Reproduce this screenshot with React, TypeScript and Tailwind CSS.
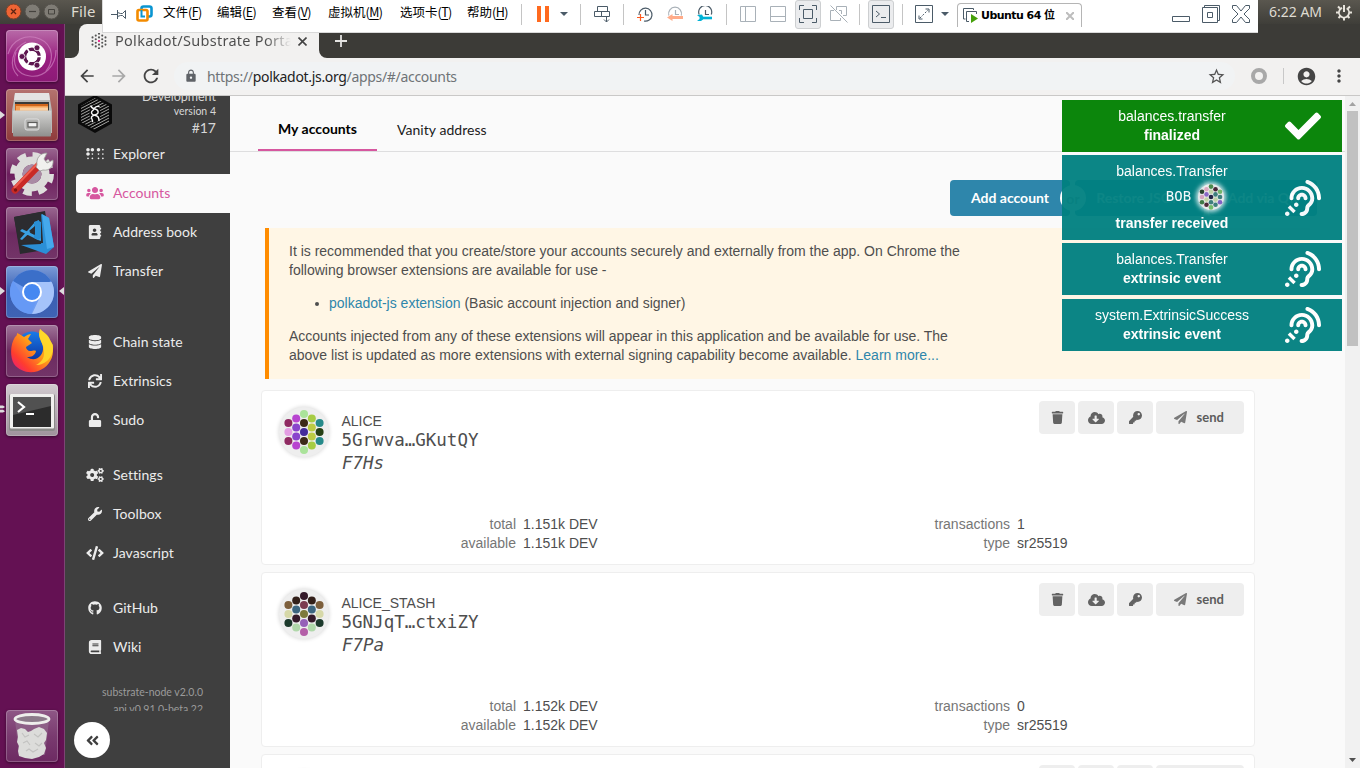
import type { ReactNode } from 'react';
import {
  FaAddressBook,
  FaAngleDoubleLeft,
  FaAssistiveListeningSystems,
  FaBook,
  FaBraille,
  FaCheck,
  FaCloudDownloadAlt,
  FaCode,
  FaCogs,
  FaDatabase,
  FaGithub,
  FaKey,
  FaPaperPlane,
  FaSync,
  FaTrash,
  FaUnlock,
  FaUsers,
  FaWrench,
} from 'react-icons/fa';
import { MdAccountCircle, MdArrowBack, MdArrowForward, MdLock, MdMoreVert, MdRefresh, MdStarBorder } from 'react-icons/md';

/* ---------- identicons ---------- */

const COLUMNS = [
  { x: -15.6, ys: [-9, 0, 9] },
  { x: -7.8, ys: [-13.5, -4.5, 4.5, 13.5] },
  { x: 0, ys: [-18, -9, 0, 9, 18] },
  { x: 7.8, ys: [-13.5, -4.5, 4.5, 13.5] },
  { x: 15.6, ys: [-9, 0, 9] },
];

const ALICE = [
  ['#8f2a62', '#e39ee3', '#8f2a62'],
  ['#b844d0', '#8a44cc', '#8a44cc', '#b844d0'],
  ['#aae39a', '#3c2a18', '#432c9b', '#3c2a18', '#aae39a'],
  ['#a6cc44', '#bccb44', '#bccb44', '#a6cc44'],
  ['#268a8a', '#263f14', '#268a8a'],
];

const ALICE_STASH = [
  ['#7d5f3c', '#d6d8a8', '#1c3a2c'],
  ['#33201a', '#3d6680', '#351a2a', '#b0d8aa'],
  ['#351a2a', '#7c3c50', '#7d7a3c', '#9560b8', '#b45fa8'],
  ['#33201a', '#3d6680', '#351a2a', '#b0d8aa'],
  ['#7d5f3c', '#d6d8a8', '#1c3a2c'],
];

const BOB = [
  ['#2c3f28', '#dda5be', '#427a42'],
  ['#dda5be', '#8560c4', '#c3d3a2', '#4a2030'],
  ['#4c8a48', '#c8d8a8', '#23203f', '#3e7f7a', '#78c068'],
  ['#4a2030', '#3e7f7a', '#c8d8a8', '#3e7f7a'],
  ['#78b868', '#3e7f7a', '#8560c4'],
];

function Dots({ colors, size }: { colors: string[][]; size: number }) {
  return (
    <svg width={size} height={size} viewBox={size === 50 ? '-25 -25 50 50' : '-22.5 -22.5 45 45'}>
      {COLUMNS.map((c, i) => c.ys.map((y, j) => <circle key={`${i}-${j}`} cx={c.x} cy={y} r={4} fill={colors[i][j]} />))}
    </svg>
  );
}

/* ---------- launcher ---------- */

function Tile({ className, children }: { className: string; children?: ReactNode }) {
  return (
    <div className={`h-[52px] w-[52px] shrink-0 overflow-hidden rounded-[4px] shadow-[0_1px_3px_rgba(0,0,0,.45),inset_0_0_0_1px_rgba(255,255,255,.22)] ${className}`}>
      <svg width="52" height="52" viewBox="0 0 52 52">
        {children}
      </svg>
    </div>
  );
}

function Launcher() {
  return (
    <div className="relative flex w-[65px] shrink-0 flex-col items-center gap-[7px] border-r border-[#7d4474] bg-[#641153] pt-[6px] pb-[6px]">
      <Tile className="bg-linear-to-b from-[#b86aa8] via-[#9a1f82] to-[#8c1a76]">
        <g fill="none" stroke="#d78fc9" strokeWidth="1.2" opacity=".6">
          <path d="M2 24C6 10 20 3 34 9s14 22 6 32" />
          <path d="M50 20c0 16-12 28-26 26S6 34 10 22" />
          <path d="M12 46C2 36 6 18 20 12" />
        </g>
        <circle cx="26" cy="26.5" r="14" fill="#fff" />
        <circle cx="26" cy="26.5" r="7.2" fill="none" stroke="#5e1750" strokeWidth="3.4" />
        <g stroke="#fff" strokeWidth="1.6">
          <path d="M26 26.500H38M26 26.500l-6-10.400M26 26.500l-6 10.400" />
        </g>
        <circle cx="26" cy="26.5" r="5.5" fill="#fff" />
        <circle cx="16" cy="26.5" r="3" fill="#5e1750" stroke="#fff" strokeWidth=".8" />
        <circle cx="31" cy="17.8" r="3" fill="#5e1750" stroke="#fff" strokeWidth=".8" />
        <circle cx="31" cy="35.2" r="3" fill="#5e1750" stroke="#fff" strokeWidth=".8" />
      </Tile>
      <Tile className="bg-linear-to-b from-[#b5736f] to-[#8e3a3b]">
        <defs>
          <linearGradient id="cab" x2="0" y2="1">
            <stop stopColor="#d6d6d4" />
            <stop offset="1" stopColor="#8f8f8d" />
          </linearGradient>
        </defs>
        <path d="M9 4h34l3 18v22H6V22z" fill="#b9b9b7" />
        <path d="M9 4h34l1 7H8z" fill="#e4e4e2" />
        <path d="M9 13h34v9H9z" fill="#3a3a38" />
        <path d="M9 15h33v7H9z" fill="#d0661c" />
        <path d="M10 17h32v5H10z" fill="#f3a055" />
        <path d="M14 18.500h28v3H14z" fill="#fbd0a0" />
        <rect x="7" y="21.5" width="38" height="26" rx="1" fill="url(#cab)" />
        <rect x="19" y="30" width="14" height="11" rx="2" fill="#b1b1af" stroke="#dedede" strokeWidth="1" />
        <rect x="22" y="33.5" width="9" height="4.5" fill="#f4f4f4" stroke="#5d5d5b" strokeWidth="1.2" />
      </Tile>
      <Tile className="bg-linear-to-b from-[#9a6791] via-[#6c1d5d] to-[#7c3b70]">
        <circle cx="26" cy="26" r="19" fill="none" stroke="#dededc" strokeWidth="6" strokeDasharray="8.4 6.52" />
        <circle cx="26" cy="26" r="13.5" fill="none" stroke="#dcdcda" strokeWidth="8" />
        <circle cx="26" cy="26" r="9.5" fill="#a98ba4" />
        <path d="M9 42L34 16" stroke="#c92a26" strokeWidth="7" strokeLinecap="round" />
        <path d="M8 40L32 15" stroke="#ee5e50" strokeWidth="2" />
        <circle cx="9.5" cy="42" r="1.7" fill="#7d1412" />
        <path d="M31 17c-1-7 3-12 10-12l-3 6 3 4 6-3c1 7-4 11-10 10l-3 1-4-4z" fill="#f0f0ee" stroke="#9a9a98" strokeWidth=".8" />
      </Tile>
      <Tile className="bg-linear-to-b from-[#9a6791] via-[#6c2a60] to-[#733468]">
        <path d="M8 10l31-6 6 38-31 5z" fill="#2a2a2e" />
        <path d="M35 7l8 4 5 29-8 7-25-9 20-1z" fill="#2b8fd6" />
        <path d="M36 7l7 4 5 29-7 2z" fill="#45a9ec" />
        <path d="M8 10l27-5 2 31-24 1z" fill="#2c2c30" />
        <path d="M14 24l2-2 19 9v3l-3-1zM14 32l15-17 4-2v4L16 33z" fill="#3aa0e2" />
        <path d="M28 15l4-1.500 3 1.500v16l-3 2-4-2z" fill="#2a8fd4" />
        <path d="M29 19v9l-6-4z" fill="#2c2c30" />
      </Tile>
      <Tile className="bg-linear-to-b from-[#7c9cd8] via-[#3a5fb2] to-[#3f63b4]">
        <circle cx="26" cy="26" r="22" fill="#6f9df2" />
        <path d="M26 26L7 15A22 22 0 0 1 45 15z" fill="#3b6fc9" />
        <path d="M26 16h19.600A22 22 0 0 1 26 48l8-17z" fill="#a5c3fa" />
        <path d="M7 15l10 16 9 4 4 0-5 13A22 22 0 0 1 7 15z" fill="#6699f5" />
        <circle cx="26" cy="26" r="10" fill="#fff" />
        <circle cx="26" cy="26" r="8" fill="#4688f1" />
      </Tile>
      <Tile className="bg-linear-to-b from-[#a0759a] via-[#6c2a60] to-[#733468]">
        <defs>
          <linearGradient id="fox" x1="1" y1="0" x2="0" y2="1">
            <stop stopColor="#ffe226" />
            <stop offset=".45" stopColor="#ff9a1a" />
            <stop offset=".75" stopColor="#ff3d2e" />
            <stop offset="1" stopColor="#e5128c" />
          </linearGradient>
          <linearGradient id="globe" x2="0" y2="1">
            <stop stopColor="#1a7be8" />
            <stop offset="1" stopColor="#0b2f9c" />
          </linearGradient>
        </defs>
        <circle cx="26" cy="22" r="15.5" fill="url(#globe)" />
        <path d="M9 12c2-1 2-3 2-4 3 1 5 3 7 4 3-2 5-3 7-3l-3 5 4 4-6 4c0 2 2 4 4 4 3 0 4-1 6 0-1 5-5 6-9 6 8 6 17-1 16-10-1-7-6-9-3-18 3 3 8 5 10 11l2 4c3 10-1 19-8 24-10 7-23 5-30-4C4 32 4 20 9 12z" fill="url(#fox)" />
        <path d="M34 4c-3 10 4 14 4 22 1 8-4 12-8 14 10 0 18-8 17-20l-3-5c-2-6-7-7-10-11z" fill="#ffdc2b" opacity=".85" />
      </Tile>
      <Tile className="bg-linear-to-b from-[#d2cbd0] to-[#9f939c]">
        <rect x="3" y="10" width="46" height="37" rx="2" fill="#8a8a88" />
        <rect x="4" y="10" width="44" height="34.5" rx="1" fill="#f0f0ee" />
        <rect x="7" y="13" width="38" height="30" fill="#2c2c2c" />
        <path d="M7 13h38v9L7 31z" fill="#515151" />
        <path d="M12 18l6 5-6 5" fill="none" stroke="#fff" strokeWidth="2.2" />
        <path d="M20 30h8" stroke="#fff" strokeWidth="2" />
      </Tile>
      <div className="flex-1" />
      <Tile className="bg-linear-to-b from-[#8e5786] via-[#7a3b70] to-[#6d2a62]">
        <path d="M9 10h34l-4 35H13z" fill="#9c7f9a" opacity=".45" />
        <path d="M11 20l4-2 4 1 3 3 3-1 3-2 5-2 5 2 3 4-1 7-2 3 2 5-2 6-5 3-7 2-7-1-6-2-1-5 1-5-2-4 1-5z" fill="#dcdcda" />
        <path d="M16 23l3 4 4-2M28 24l4 3 4-4M17 33l4-2 3 4M29 33l4 3 3-3M20 41l3-2 4 3 5-3" fill="none" stroke="#c2c2c0" strokeWidth="1.1" />
        <ellipse cx="26" cy="9" rx="17" ry="4.5" fill="#8c7a8a" stroke="#eeeeec" strokeWidth="2.8" />
      </Tile>
      <svg className="absolute left-0 top-[87px]" width="5" height="8"><path d="M0 0l5 4-5 4z" fill="#ddd" /></svg>
      <svg className="absolute left-0 top-[263px]" width="5" height="8"><path d="M0 0l5 4-5 4z" fill="#ddd" /></svg>
      <svg className="absolute right-0 top-[263px]" width="5" height="8"><path d="M5 0L0 4l5 4z" fill="#ddd" /></svg>
      <svg className="absolute left-0 top-[381px]" width="5" height="8"><path d="M0 .5h3l2 1.500-2 1.200H0zM0 4.800h3l2 1.500-2 1.200H0z" fill="#ddd" /></svg>
    </div>
  );
}

/* ---------- virtual machine toolbar ---------- */

const INK = '#4b5b68';
const PALE = '#a9b1b8';

function Sep({ className }: { className: string }) {
  return <div className={`h-[21px] w-px shrink-0 bg-[#c4c4c4] ${className}`} />;
}

function Menu({ className, label, hot }: { className: string; label: string; hot: string }) {
  return (
    <div className={`-mt-[4px] shrink-0 whitespace-nowrap text-[12.5px] leading-[20px] text-black ${className}`}>
      {label}
      <span className="tracking-[-0.6px]">
        (<span className="underline underline-offset-2">{hot}</span>)
      </span>
    </div>
  );
}

function Clock({ className, color, children }: { className: string; color: string; children: ReactNode }) {
  return (
    <svg className={`shrink-0 ${className}`} width="16" height="17" viewBox="0 0 16 17" fill="none" stroke={color} strokeWidth="1.2">
      {children}
    </svg>
  );
}

function VmBar() {
  return (
    <div className="absolute left-[102px] top-0 z-20 flex h-[33px] w-[1156px] items-center overflow-hidden border-b border-l border-[#d9d9d9] bg-white pb-[4px] font-[family-name:'Noto_Sans_CJK_SC',sans-serif]">
      <svg className="ml-[8px] shrink-0" width="16" height="11" viewBox="0 0 16 11" fill="none" stroke={INK}>
        <path d="M0 5.500h6M6.500 1v9M6.500 3.500l3 1h2l3-3v8l-3-3h-2l-3 1" />
      </svg>
      <svg className="-mt-px ml-[9px] shrink-0" width="17" height="17" viewBox="0 0 17 17" fill="none" strokeWidth="2.6">
        <path d="M5.500 5V3.500a2 2 0 0 1 2-2h6a2 2 0 0 1 2 2v6a2 2 0 0 1-2 2H12" stroke="#0a95d1" />
        <rect x="1.5" y="5" width="10" height="10.5" rx="1.5" stroke="#f38b00" />
        <path d="M5.500 5v6.500H9" stroke="#0a95d1" strokeWidth="2" />
      </svg>
      <Menu className="ml-[10px] w-[54px]" label="文件" hot="F" />
      <Menu className="w-[55px]" label="编辑" hot="E" />
      <Menu className="w-[56px]" label="查看" hot="V" />
      <Menu className="w-[72px]" label="虚拟机" hot="M" />
      <Menu className="w-[67px]" label="选项卡" hot="T" />
      <Menu className="w-[54px]" label="帮助" hot="H" />
      <Sep className="" />
      <div className="ml-[15px] h-[16px] w-[12px] shrink-0 border-x-[4px] border-[#ff6a1f]" />
      <svg className="ml-[11px] shrink-0" width="8" height="4"><path d="M0 0h8L4 4z" fill={INK} /></svg>
      <Sep className="ml-[12px]" />
      <svg className="ml-[13px] shrink-0" width="17" height="17" viewBox="0 0 17 17" fill="none" stroke={INK}>
        <path d="M3.500.5h10v5h-10zM.5 5.500h7v5h-7zM7.500 5.500h8v5h-8zM12.500 10v6M10 13.500l2.500 2.500 2.500-2.500" />
      </svg>
      <Sep className="ml-[12px]" />
      <Clock className="ml-[13px]" color={INK}>
        <path d="M2 9a6.500 6.500 0 1 1 5 6M8.500 4v5H12" />
        <path d="M0 11.500h7M3.500 8v7" stroke="#ff5a1f" />
      </Clock>
      <Clock className="ml-[14px]" color={PALE}>
        <path d="M1.800 9.500a6.500 6.500 0 1 1 12.500 0M8.500 4v4.500H12" />
        <path d="M16 11.500H5" stroke="#ffac8a" strokeWidth="3" />
        <path d="M0 11.500L5.500 8v7z" fill="#ffac8a" stroke="none" />
      </Clock>
      <Clock className="ml-[14px]" color={INK}>
        <path d="M2.200 8.500a6.500 6.500 0 1 1 12 0M8.500 4v4.500H12" />
        <path d="M3 12h12" stroke="#00b2d6" strokeWidth="2.6" />
        <path d="M0 9l5-.5 1 2v3l-2 1.500H0l2.500-2v-2z" fill="#00b2d6" stroke="none" />
      </Clock>
      <Sep className="ml-[13px]" />
      <svg className="ml-[13px] shrink-0" width="17" height="17" fill="none" stroke={PALE}>
        <path d="M.5.5h15v15H.5zM5.500.5v15" />
      </svg>
      <svg className="ml-[13px] shrink-0" width="17" height="17" fill="none" stroke={PALE}>
        <path d="M.5.5h15v15H.5zM.5 10.500h15" />
      </svg>
      <div className="ml-[8px] flex h-[29px] w-[26px] shrink-0 items-center justify-center rounded-[3px] border border-[#cdcfd1] bg-[#ebecee]">
        <svg width="18" height="18" fill="none" stroke={INK}>
          <path d="M.5 5V.5H5M13 .5h4.500V5M17.500 13v4.500H13M5 17.500H.5V13M4.500 4.500h9v9h-9z" />
        </svg>
      </div>
      <svg className="ml-[9px] shrink-0" width="18" height="18" fill="none" stroke={PALE}>
        <path d="M6.500 5V1.500h10v9H13M9 5.500h2.500V9M.5 9V5.500H4M.5 9v6.500h10V13M.5.5l17 17" />
      </svg>
      <Sep className="ml-[11px]" />
      <div className="ml-[8px] flex h-[29px] w-[26px] shrink-0 items-center justify-center rounded-[3px] border border-[#cdcfd1] bg-[#ebecee]">
        <svg width="18" height="18" fill="none" stroke={INK}>
          <path d="M.5.5h17v17H.5z" />
          <path d="M4 6l3.500 3L4 12M9 12.500h5" />
        </svg>
      </div>
      <Sep className="ml-[8px]" />
      <svg className="ml-[12px] shrink-0" width="18" height="18" fill="none" stroke={INK}>
        <path d="M.5.5h17v17H.5zM10.500 4H14v3.500M4 10.500V14h3.500" />
        <path d="M5 13l8-8" strokeDasharray="2 1.5" />
      </svg>
      <svg className="ml-[8px] shrink-0" width="8" height="4"><path d="M0 0h8L4 4z" fill={INK} /></svg>
      <div className="mt-[2px] ml-[8px] flex h-[24px] w-[125px] shrink-0 items-center rounded-t-[4px] border border-b-0 border-[#b5b5b5] pl-[5px]">
        <svg className="shrink-0" width="16" height="16" fill="none" stroke={INK}>
          <path d="M2.500 11H.5V.5h10V2M6 13.500H3.500v-10h10V6" />
          <path d="M8 6l7 4.500L8 15z" fill="#45a00a" stroke="none" />
        </svg>
        <div className="ml-[2px] w-[85px] whitespace-nowrap pt-[2px] text-[11px] font-bold tracking-[-0.55px] text-black font-[family-name:'DejaVu_Sans','Noto_Sans_CJK_SC',sans-serif]">
          Ubuntu 64 位
        </div>
        <svg className="shrink-0" width="8" height="8"><path d="M0 0l8 8M8 0L0 8" stroke="#bdbdbd" strokeWidth="2" /></svg>
      </div>
      <svg className="ml-[90px] mt-[10px] shrink-0" width="18" height="7" fill="none" stroke={INK}><path d="M.5.5h17v5H.5z" /></svg>
      <svg className="ml-[12px] shrink-0" width="18" height="18" fill="none" stroke={INK}>
        <path d="M2.500 2.500v-2h15v15h-2M.5 2.500h15v15H.5zM5.500 7.500h5v5h-5z" />
      </svg>
      <svg className="ml-[12px] shrink-0" width="18" height="18" fill="none" stroke={INK}>
        <path d="M.5.5h4L9 6 13.500.5h4v3L12 9l5.500 5.500v3h-4L9 12l-4.500 5.500h-4v-3L6 9 .5 3.500z" />
      </svg>
    </div>
  );
}

/* ---------- desktop panel & browser chrome ---------- */

function TopPanel() {
  return (
    <div className="flex h-6 shrink-0 items-center bg-linear-to-b from-[#5a574f] to-[#3f3e39] font-[family-name:'Noto_Sans',sans-serif] text-[15px] text-[#dfdbd2]">
      <svg className="-mt-px ml-[5px] shrink-0" width="55" height="17" fill="none">
        <circle cx="8.5" cy="8.5" r="7.5" fill="#ee6434" stroke="#7d4128" />
        <path d="M6 6l5 5M11 6l-5 5" stroke="#5c2412" strokeWidth="1.3" />
        <circle cx="27.5" cy="8.5" r="7.5" fill="#7f7c75" stroke="#55524c" />
        <path d="M24 8.500h7" stroke="#45433e" strokeWidth="1.2" />
        <circle cx="46.5" cy="8.5" r="7.5" fill="#7f7c75" stroke="#55524c" />
        <path d="M43.500 6.500h6v4.500h-6z" stroke="#45433e" />
      </svg>
      <div className="-mt-[2px] ml-[11px] tracking-[0.15px]">File</div>
      <div className="-mt-px ml-auto w-[54px] whitespace-nowrap text-[14px]">6:22 AM</div>
      <svg className="ml-[13px] mr-[8px] shrink-0" width="16" height="17" viewBox="0 0 16 17" fill="none" stroke="#e8e4dc">
        <circle cx="8" cy="8.5" r="5" strokeWidth="1.8" strokeDasharray="26 6" transform="rotate(-58 8 8.5)" />
        <path d="M8 1v7" strokeWidth="2" />
        <path d="M13 8.500h3M0 8.500h3M8 13.500v3M11.500 12l2 2M4.500 12l-2 2M12 4.500l2-2M4 4.500l-2-2" strokeWidth="2" />
      </svg>
    </div>
  );
}

function TabStrip() {
  return (
    <div className="flex h-[34px] shrink-0 bg-[#3c3b37] pl-[6px]">
      <svg className="mt-[26px] shrink-0" width="8" height="8"><path d="M8 0v8H0a8 8 0 0 0 8-8z" fill="#f2f1f0" /></svg>
      <div className="flex w-[240px] items-center rounded-t-[8px] bg-[#f2f1f0] pl-[12px]">
        <svg className="shrink-0" width="16" height="16" viewBox="-26 -26 52 52">
          {COLUMNS.map((c, i) => c.ys.map((y, j) => <circle key={`${i}-${j}`} cx={c.x * 1.35} cy={y * 1.3} r={3.4} fill={i === 2 && j === 2 ? '#e6007a' : '#555'} />))}
        </svg>
        <div className="-mt-[2px] ml-[8px] w-[176px] overflow-hidden whitespace-nowrap bg-linear-to-r from-[#4c4c4c] from-85% to-[#f2f1f0] bg-clip-text font-[family-name:'Noto_Sans',sans-serif] text-[14.5px] leading-[20px] tracking-[0.28px] text-transparent">
          Polkadot/Substrate Portal
        </div>
        <svg className="ml-[7px] shrink-0" width="9" height="9"><path d="M.5.5l8 8M8.500.5l-8 8" stroke="#444" strokeWidth="1.6" /></svg>
      </div>
      <svg className="mt-[26px] shrink-0" width="8" height="8"><path d="M0 0v8h8a8 8 0 0 1-8-8z" fill="#f2f1f0" /></svg>
      <svg className="ml-[8px] mt-[11px] shrink-0" width="12" height="12"><path d="M6 0v12M0 6h12" stroke="#e4e3e1" strokeWidth="1.8" /></svg>
    </div>
  );
}

function AddressBar() {
  return (
    <div className="flex h-[38px] shrink-0 items-center border-b border-[#c9c8c7] bg-[#f2f1f0]">
      <div className="flex flex-1 items-center pb-px">
        <MdArrowBack className="ml-[12px] h-[20px] w-[20px] shrink-0 text-[#444]" />
        <MdArrowForward className="ml-[12px] h-[20px] w-[20px] shrink-0 text-[#a8a8a8]" />
        <MdRefresh className="ml-[11px] h-[22px] w-[22px] shrink-0 text-[#444]" />
        <div className="ml-[12px] flex h-[28px] w-[1061px] items-center rounded-full bg-[#f1f3f4] font-[family-name:'Noto_Sans',sans-serif]">
          <MdLock className="ml-[10px] h-[14px] w-[14px] shrink-0 text-[#5f6368]" />
          <div className="ml-[9px] whitespace-nowrap pt-px text-[14px] tracking-[-0.32px] text-[#6f7377]">
            https://<span className="text-[#222]">polkadot.js.org</span>/apps/#/accounts
          </div>
          <MdStarBorder className="ml-auto mr-[9px] h-[19px] w-[19px] shrink-0 text-[#555]" />
        </div>
        <div className="ml-[16px] h-[16px] w-[16px] shrink-0 rounded-full border-[4px] border-[#a8a8a8]" />
        <div className="ml-[16px] h-[16px] w-px shrink-0 bg-[#c8c8c8]" />
        <MdAccountCircle className="ml-[12px] h-[21px] w-[21px] shrink-0 text-[#454545]" />
        <MdMoreVert className="ml-[12px] h-[20px] w-[20px] shrink-0 text-[#444]" />
      </div>
    </div>
  );
}

/* ---------- portal ---------- */

function NavItem({ icon, label, active }: { icon: ReactNode; label: string; active?: boolean }) {
  return (
    <div
      className={`ml-[11px] flex h-[39px] shrink-0 items-center rounded-l-[4px] pb-[2px] text-[14px] ${
        active ? 'bg-[#fafafa] text-[#d6579f]' : 'text-[#ececec]'
      }`}
    >
      <span className="ml-[9px] flex w-[19px] shrink-0 items-center justify-center text-[14px]">{icon}</span>
      <span className="ml-[9px] tracking-[0.04px]">{label}</span>
    </div>
  );
}

function Sidebar() {
  return (
    <div className="relative flex w-[165px] shrink-0 flex-col bg-[#3f3f3f] font-[family-name:Lato,sans-serif]">
      <div className="flex h-[615px] flex-col overflow-hidden">
        <div className="flex h-[39px] shrink-0 items-end justify-between pr-[14px] pl-[13px]">
          <svg className="mb-[2px] shrink-0" width="34" height="38" viewBox="0 0 34 38">
            <defs>
              <clipPath id="hex">
                <path d="M17 3l14 8v16l-14 8-14-8V11z" />
              </clipPath>
            </defs>
            <path d="M17 0l17 9.500v19L17 38 0 28.500v-19z" fill="#0a0a0a" />
            <g clipPath="url(#hex)" stroke="#b8b8b6" strokeWidth=".9">
              <path d="M2 11L20 1.500M2 14L24 2.500M2 17L28 3.500M2 20L31 5M2 23L32 7.500M2 26L32 10.500M2 29L32 13.500M4 31L32 16.500M6 33L32 19.500M8 35L32 22.500M12 36L32 25.500" />
            </g>
            <ellipse cx="17" cy="18.5" rx="5.5" ry="9" fill="#0a0a0a" />
            <g fill="none" stroke="#f6f6f6" strokeWidth="1.4" strokeLinecap="round">
              <path d="M13 11c.5 2 2 2.500 4 3s3.500 2 3 4-6 2-6.500 4 1.500 2.500 1 4.500" />
              <path d="M21 11.500c-3-.5-4 .5-5 2.500s-2.500 2-2.500 3.500 1.500 2.500 4 3 3.500 2 3.500 5" />
            </g>
          </svg>
          <div className="-mb-[2px] text-right text-[#d6d6d6]">
            <div className="text-[12.5px] leading-[15px]">Development</div>
            <div className="text-[10.5px] leading-[14px]">version 4</div>
            <div className="text-[14px] leading-[19px]">#17</div>
          </div>
        </div>
        <NavItem icon={<FaBraille className="h-[14px] w-[18px]" />} label="Explorer" />
        <NavItem icon={<FaUsers className="h-[14px] w-[18px]" />} label="Accounts" active />
        <NavItem icon={<FaAddressBook />} label="Address book" />
        <NavItem icon={<FaPaperPlane />} label="Transfer" />
        <div className="h-[32px] shrink-0" />
        <NavItem icon={<FaDatabase />} label="Chain state" />
        <NavItem icon={<FaSync />} label="Extrinsics" />
        <NavItem icon={<FaUnlock />} label="Sudo" />
        <div className="h-[16px] shrink-0" />
        <NavItem icon={<FaCogs className="h-[14px] w-[18px]" />} label="Settings" />
        <NavItem icon={<FaWrench />} label="Toolbox" />
        <NavItem icon={<FaCode className="h-[14px] w-[18px]" />} label="Javascript" />
        <div className="h-[16px] shrink-0" />
        <NavItem icon={<FaGithub />} label="GitHub" />
        <NavItem icon={<FaBook />} label="Wiki" />
        <div className="mt-[17px] shrink-0 pr-[27px] text-right text-[10.5px] leading-[17px] text-[#9b9b9b]">
          <div>substrate-node v2.0.0</div>
          <div>api v0.91.0-beta.22</div>
        </div>
      </div>
      <div className="ml-[9px] mt-[11px] flex h-[36px] w-[36px] items-center justify-center rounded-full bg-white text-[#3f3f3f]">
        <FaAngleDoubleLeft className="h-[15px] w-[15px]" />
      </div>
    </div>
  );
}

function IconButton({ children }: { children: ReactNode }) {
  return <div className="flex h-[33px] w-[36px] items-center justify-center rounded-[4px] bg-[#eeeeee] text-[14px] text-[#636363]">{children}</div>;
}

function Facts({ width, rows }: { width: string; rows: [string, string][] }) {
  return (
    <div className={`grid gap-x-[7px] text-[14px] leading-[19px] ${width}`}>
      {rows.map(([k, v]) => (
        <div key={k} className="contents">
          <span className="text-right text-[#767676]">{k}</span>
          <span className="text-[#4e4e4e]">{v}</span>
        </div>
      ))}
    </div>
  );
}

interface Account {
  name: string;
  address: string;
  short: string;
  amount: string;
  transactions: string;
  colors: string[][];
}

const ACCOUNTS: Account[] = [
  { name: 'ALICE', address: '5Grwva…GKutQY', short: 'F7Hs', amount: '1.151k DEV', transactions: '1', colors: ALICE },
  { name: 'ALICE_STASH', address: '5GNJqT…ctxiZY', short: 'F7Pa', amount: '1.152k DEV', transactions: '0', colors: ALICE_STASH },
];

function CardActions() {
  return (
    <div className="ml-auto flex gap-[3px]">
      <IconButton><FaTrash className="h-[13px] w-[13px]" /></IconButton>
      <IconButton><FaCloudDownloadAlt className="h-[14px] w-[17px]" /></IconButton>
      <IconButton><FaKey className="h-[13px] w-[13px]" /></IconButton>
      <div className="flex h-[33px] w-[88px] items-center rounded-[4px] bg-[#eeeeee] pl-[18px] font-[family-name:Lato,sans-serif] text-[13px] font-bold text-[#5c5c5c]">
        <FaPaperPlane className="h-[13px] w-[13px] opacity-80" />
        <span className="ml-[9.5px]">send</span>
      </div>
    </div>
  );
}

function AccountCard({ account }: { account: Account }) {
  return (
    <div className="flex h-[175px] w-[994px] shrink-0 flex-col rounded-[4px] border border-[#eeeeee] bg-white">
      <div className="flex pl-[17px] pt-[10px] pr-[10px]">
        <div className="mt-[6px] h-[50px] w-[50px] shrink-0 rounded-full bg-[#eeeeee] shadow-[0_0_4px_rgba(0,0,0,.18)]">
          <Dots colors={account.colors} size={50} />
        </div>
        <div className="ml-[12.5px] pt-[11px] text-[#4e4e4e]">
          <div className="text-[14px] leading-[18px]">{account.name}</div>
          <div className="font-[family-name:'DejaVu_Sans_Mono',monospace] text-[17.5px] leading-[20px]">{account.address}</div>
          <div className="ml-[0.5px] font-[family-name:'DejaVu_Sans_Mono',monospace] text-[17.5px] leading-[26px] italic">{account.short}</div>
        </div>
        <CardActions />
      </div>
      <div className="mt-auto flex pb-[11px] pl-[154px]">
        <Facts width="w-[494px] grid-cols-[100px_1fr]" rows={[['total', account.amount], ['available', account.amount]]} />
        <Facts width="w-[300px] grid-cols-[100px_1fr]" rows={[['transactions', account.transactions], ['type', 'sr25519']]} />
      </div>
    </div>
  );
}

function Toast({ title, detail, color, height, icon, middle }: { title: string; detail: string; color: string; height: string; icon: ReactNode; middle?: ReactNode }) {
  return (
    <div className={`flex items-center text-white opacity-95 ${color} ${height}`}>
      <div className="w-[220px] pb-px text-center text-[14px] leading-[19px]">
        <div>{title}</div>
        {middle}
        <div className="font-bold">{detail}</div>
      </div>
      <div className="ml-[3px]">{icon}</div>
    </div>
  );
}

function Toasts() {
  const ear = <FaAssistiveListeningSystems className="h-[36px] w-[36px]" />;
  return (
    <div className="absolute right-[18px] top-[4px] z-10 flex w-[280px] flex-col gap-[3px] font-[family-name:'Liberation_Sans',Arial,sans-serif]">
      <Toast title="balances.transfer" detail="finalized" color="bg-[#008000]" height="h-[52px]" icon={<FaCheck className="h-[36px] w-[36px]" />} />
      <Toast
        title="balances.Transfer"
        detail="transfer received"
        color="bg-[#008080]"
        height="h-[85px]"
        icon={ear}
        middle={
          <div className="flex h-[33px] items-center justify-center gap-[7px] pl-[46px]">
            <span className="-mt-[2px] font-[family-name:'DejaVu_Sans_Mono',monospace] text-[14px]">BOB</span>
            <span className="h-[26px] w-[26px] rounded-full bg-[#eeeeee] shadow-[0_0_4px_2px_rgba(255,255,255,.8)]">
              <Dots colors={BOB} size={26} />
            </span>
          </div>
        }
      />
      <Toast title="balances.Transfer" detail="extrinsic event" color="bg-[#008080]" height="h-[52px]" icon={ear} />
      <div className="pt-px">
        <Toast title="system.ExtrinsicSuccess" detail="extrinsic event" color="bg-[#008080]" height="h-[52px]" icon={ear} />
      </div>
    </div>
  );
}

function Accounts() {
  return (
    <div className="flex min-w-0 flex-1 flex-col overflow-hidden bg-[#fafafa] font-[family-name:'Liberation_Sans',Arial,sans-serif]">
      <div className="flex h-[56px] shrink-0 border-b border-[#dededf] pl-[28px] font-[family-name:Lato,sans-serif] text-[14px] text-[#1b1b1b]">
        <div className="mb-[-1px] flex h-[55px] w-[119px] items-center justify-center border-b-2 border-[#d6579f] pt-[12px] font-bold text-black">My accounts</div>
        <div className="ml-[20px] flex h-[55px] items-center pt-[11px] tracking-[0.05px]">Vanity address</div>
      </div>
      <div className="mt-[28px] flex h-[36px] shrink-0 pl-[720px] font-[family-name:Lato,sans-serif] text-[14px] font-bold text-white">
        <div className="flex w-[120px] items-center justify-center rounded-[4px] bg-[#2e86ab] pb-[2px]">Add account</div>
        <div className="relative w-[5px]">
          <div className="absolute -left-[10px] top-[5px] flex h-[26px] w-[26px] items-center justify-center rounded-full bg-white text-[#999]">or</div>
        </div>
        <div className="flex w-[129px] items-center justify-center rounded-[4px] bg-[#2e86ab] pb-[2px]">Restore JSON</div>
        <div className="w-[5px]" />
        <div className="flex w-[108px] items-center justify-center rounded-[4px] bg-[#2e86ab] pb-[2px]">Add via QR</div>
      </div>
      <div className="ml-[35px] mt-[12px] h-[151px] w-[1045px] shrink-0 border-l-[4px] border-[#ff8c00] bg-[#fff6e5] pl-[20px] pt-[14px] text-[14px] leading-[19px] text-[#4e4e4e]">
        <p>
          It is recommended that you create/store your accounts securely and externally from the app. On Chrome the
          <br />
          following browser extensions are available for use -
        </p>
        <div className="my-[14px] flex items-center pl-[26px]">
          <span className="h-[4px] w-[4px] rounded-full bg-[#4e4e4e]" />
          <span className="ml-[10px]">
            <span className="text-[#2e86ab]">polkadot-js extension</span> (Basic account injection and signer)
          </span>
        </div>
        <p>
          Accounts injected from any of these extensions will appear in this application and be available for use. The
          <br />
          above list is updated as more extensions with external signing capability become available. <span className="text-[#2e86ab]">Learn more...</span>
        </p>
      </div>
      <div className="mt-[11px] flex flex-col gap-[7px] pl-[31px]">
        {ACCOUNTS.map((a) => (
          <AccountCard key={a.name} account={a} />
        ))}
        <div className="flex h-[175px] w-[994px] shrink-0 rounded-[4px] border border-[#eeeeee] bg-white pt-[10px] pr-[10px]">
          <div className="ml-[17px] mt-[6px] h-[50px] w-[50px] shrink-0 rounded-full bg-[#eeeeee] shadow-[0_0_4px_rgba(0,0,0,.18)]" />
          <CardActions />
        </div>
      </div>
    </div>
  );
}

function Scrollbar() {
  return (
    <div className="flex w-[15px] shrink-0 flex-col items-center bg-[#f1f1f1]">
      <svg className="mt-[6px] shrink-0" width="7" height="4"><path d="M0 4h7L3.500 0z" fill="#a3a3a3" /></svg>
      <div className="mt-[5px] h-[235px] w-[11px] shrink-0 bg-[#c1c1c1]" />
      <div className="flex-1" />
      <svg className="mb-[6px] shrink-0" width="7" height="4"><path d="M0 0h7L3.500 4z" fill="#505050" /></svg>
    </div>
  );
}

export default function App() {
  return (
    <div className="relative flex h-[768px] w-[1360px] flex-col overflow-hidden bg-[#3c3b37]">
      <TopPanel />
      <VmBar />
      <div className="flex min-h-0 flex-1">
        <Launcher />
        <div className="flex min-w-0 flex-1 flex-col">
          <TabStrip />
          <AddressBar />
          <div className="relative flex min-h-0 flex-1 overflow-hidden">
            <Sidebar />
            <Accounts />
            <Scrollbar />
            <Toasts />
          </div>
        </div>
      </div>
    </div>
  );
}
